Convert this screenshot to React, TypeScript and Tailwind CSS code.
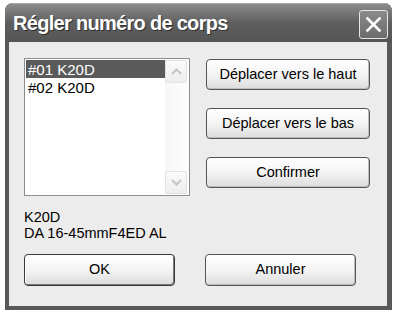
import { ReactNode } from 'react'

const font = { fontFamily: '"Liberation Sans", Arial, sans-serif' }

function XpButton({ children, isDefault = false, className = '' }: { children: ReactNode; isDefault?: boolean; className?: string }) {
  return (
    <button
      type="button"
      className={`flex items-center justify-center rounded-[4px] border bg-gradient-to-b from-white via-[#f4f4f4] to-[#dcdcdc] text-[14.5px] text-black ${
        isDefault ? 'border-[#3a3a3a] shadow-[inset_-1px_-1px_0_#777,inset_1px_1px_0_#fff]' : 'border-[#555] shadow-[inset_-1px_-1px_0_#bdbdbd]'
      } ${className}`}
    >
      {children}
    </button>
  )
}

function ArrowBox({ up }: { up: boolean }) {
  return (
    <div className="flex h-[23px] w-[22px] items-center justify-center rounded-[2px] border border-[#e2e2e2] bg-gradient-to-b from-[#fbfbfb] to-[#ededed]">
      <svg width="11" height="7" viewBox="0 0 11 7">
        <path d={up ? 'M1 6 L5.5 1.5 L10 6' : 'M1 1 L5.5 5.5 L10 1'} fill="none" stroke="#c4c4c4" strokeWidth="2" />
      </svg>
    </div>
  )
}

export default function App() {
  const rows = ['#01 K20D', '#02 K20D']

  return (
    <div className="h-[312px] w-[395px] bg-white pl-[5px] pt-[3px]" style={font}>
      <div className="flex h-[307px] w-[387px] flex-col overflow-hidden rounded-t-[8px] bg-[#585858]">
        {/* title bar */}
        <div className="flex h-[39px] shrink-0 items-center justify-between bg-gradient-to-b from-[#8e8e8e] via-[#5f5f5f] to-[#555] pl-[8px] pr-[4px] shadow-[inset_0_1px_0_#a8a8a8]">
          <span className="text-[20px] font-bold tracking-[-0.7px] text-white [text-shadow:1px_1px_0_#2e2e2e]">Régler numéro de corps</span>
          <div className="mb-[-3px] flex h-[29px] w-[29px] items-center justify-center rounded-[3px] border border-[#e6e6e6] bg-gradient-to-b from-[#8a8a8a] to-[#6c6c6c]">
            <svg width="17" height="17" viewBox="0 0 17 17">
              <path d="M2.5 2.5 L14.5 14.5 M14.5 2.5 L2.5 14.5" stroke="#fff" strokeWidth="2.6" strokeLinecap="square" />
            </svg>
          </div>
        </div>

        {/* client area */}
        <div className="mx-[4px] mb-[4px] mr-[5px] flex flex-1 flex-col bg-[#ececec] pl-[15px] pt-[16px]">
          <div className="flex gap-[16px]">
            <div className="flex h-[138px] w-[166px] border border-[#8d8d8d] bg-white p-[1px]">
              <div className="flex flex-1 flex-col">
                {rows.map((row, i) => (
                  <div
                    key={row}
                    className={`flex h-[18px] items-center pl-[2px] text-[15px] leading-none ${i === 0 ? 'bg-[#5a5a5a] text-white' : 'text-black'}`}
                  >
                    {row}
                  </div>
                ))}
              </div>
              <div className="flex w-[23px] flex-col justify-between bg-gradient-to-r from-[#f6f6f6] to-[#fdfdfd]">
                <ArrowBox up />
                <ArrowBox up={false} />
              </div>
            </div>

            <div className="mt-[1px] flex w-[164px] flex-col gap-[18px]">
              <XpButton className="h-[31px]">Déplacer vers le haut</XpButton>
              <XpButton className="h-[31px]">Déplacer vers le bas</XpButton>
              <XpButton className="h-[31px]">Confirmer</XpButton>
            </div>
          </div>

          <div className="mt-[13px] text-[14.5px] leading-[16px] text-black">
            <div>K20D</div>
            <div>DA 16-45mmF4ED AL</div>
          </div>

          <div className="mt-[13px] flex gap-[30px]">
            <XpButton isDefault className="h-[32px] w-[151px]">OK</XpButton>
            <XpButton className="h-[32px] w-[151px]">Annuler</XpButton>
          </div>
        </div>
      </div>
    </div>
  )
}
